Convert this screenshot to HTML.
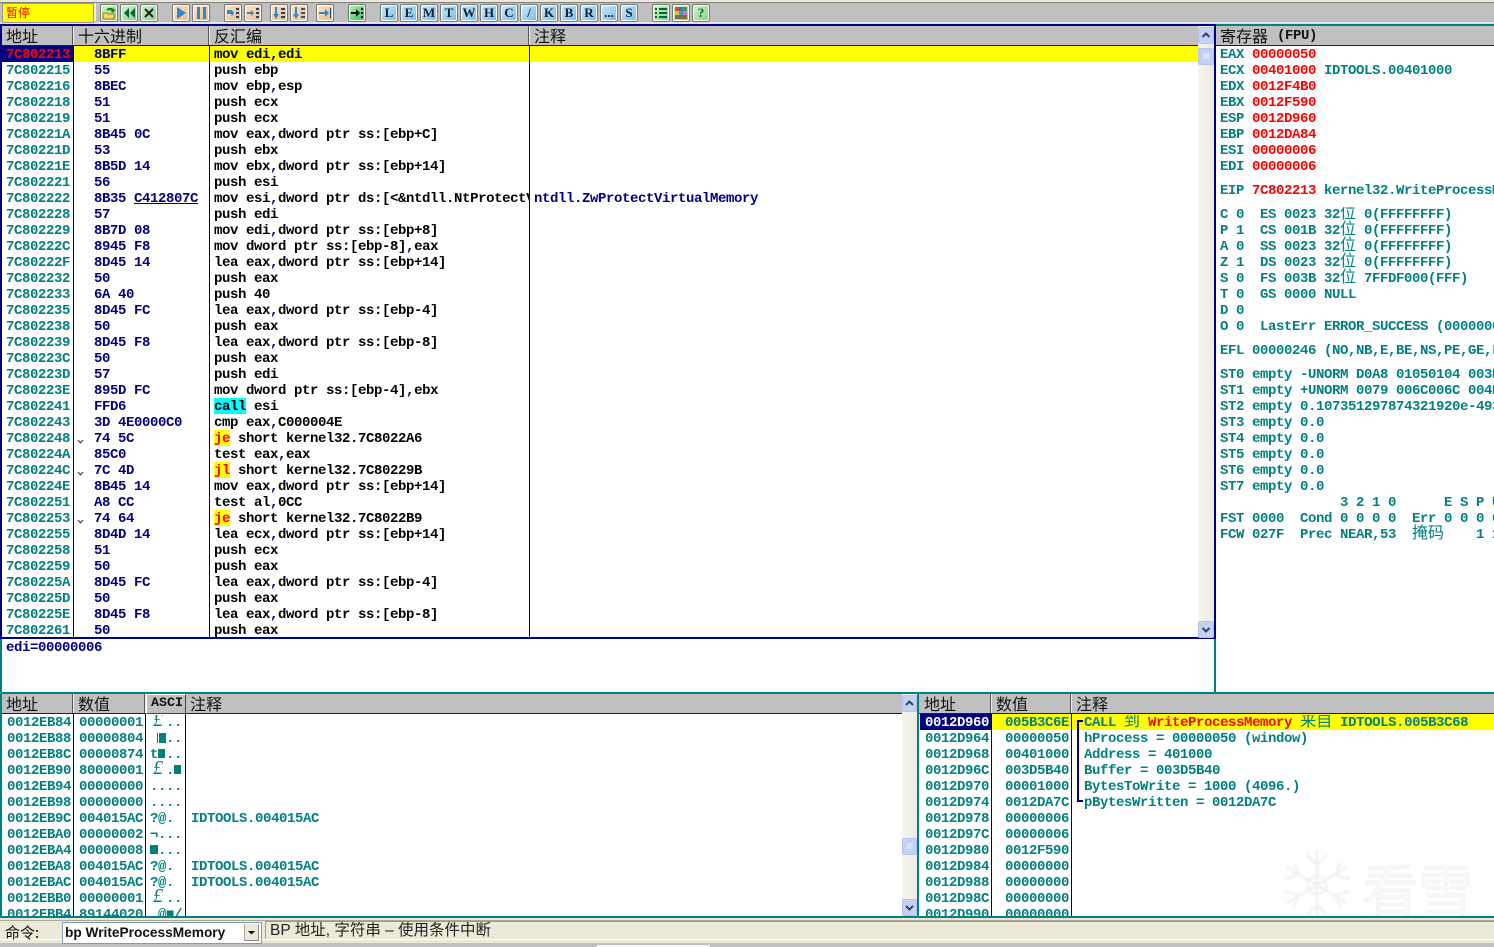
<!DOCTYPE html>
<html><head><meta charset="utf-8"><title>OllyDbg</title>
<style>
html,body{margin:0;padding:0;width:1494px;height:947px;overflow:hidden;background:#fff}
.a{position:absolute}
pre{position:absolute;margin:0;font:bold 14px/16px "Liberation Mono","Noto Sans CJK SC",monospace;letter-spacing:-.4px;overflow:hidden;white-space:pre;transform:translateY(1px)}
.t{color:#008080}.n{color:#000080}.k{color:#000}.r{color:#f00}
i{font-style:normal;color:#000080}
u{text-decoration:underline;text-underline-offset:1px}
.c{font:400 16px/0 "Noto Sans CJK SC",sans-serif;letter-spacing:0;display:inline-block;width:16px;vertical-align:baseline}
.p{font:italic 400 20px/0 "Liberation Serif",serif;letter-spacing:0;display:inline-block;width:16px;text-indent:3px;vertical-align:baseline}
.h{position:absolute;font:400 16px/18px "Noto Sans CJK SC",sans-serif;color:#111;white-space:nowrap;overflow:hidden}
.v{position:absolute;width:1px;background:#000080}
.hd{position:absolute;height:19px;background:#c0c0c0;border-bottom:1px solid #222}
.hv{position:absolute;width:2px;height:19px;background:#555;border-right:1px solid #eee;box-sizing:border-box}
.b{position:absolute;top:4px;width:16px;height:16px;border:1px solid #777;border-radius:2px;box-shadow:inset 0 0 0 1px #fff;text-align:center;font:bold 13px/16px "Liberation Serif",serif;color:#123;overflow:hidden}
.b svg{position:absolute;left:0;top:0}
.g{background:linear-gradient(135deg,#d8f5c8,#7fd088)}
.o{background:linear-gradient(135deg,#fbe6cc,#f0b880)}
.l{background:linear-gradient(135deg,#cfeafa,#78bce8)}
.tr{position:absolute;background:linear-gradient(90deg,#f6f5ef,#ecebe2)}
.sb{position:absolute;width:14px;height:15px;border:1px solid #b4c4ee;border-radius:2px;background:#c3d1f5}
.sb svg{position:absolute;left:0;top:0}
.bk{position:absolute;background:#008080}
</style></head><body>

<!-- toolbar -->
<div class="a" style="left:0;top:0;width:1494px;height:2px;background:#ece9d8"></div>
<div class="a" style="left:0;top:2px;width:1494px;height:1px;background:#808080"></div>
<div class="a" style="left:0;top:3px;width:1494px;height:19px;background:#c0c0c0"></div>
<div class="a" style="left:0;top:22px;width:1494px;height:2px;background:#e4e4e4"></div>
<div class="a" style="left:2px;top:3px;width:90px;height:18px;background:#ff0;border:1px solid #999;color:#f00;font:400 12px/17px 'Noto Sans CJK SC',sans-serif;text-indent:3px">暂停</div>
<div class="a" style="left:94px;top:3px;width:2px;height:18px;background:#eee"></div>

<div class="b g" style="left:100px"><svg width="16" height="16"><path d="M2 8h4l1 1h6v5H2z" fill="#f6d860" stroke="#a08020"/><path d="M6 5a4 3 0 0 1 7 1" fill="none" stroke="#108010" stroke-width="2"/><path d="M11 8l4-3h-5z" fill="#108010"/></svg></div>
<div class="b g" style="left:120px"><svg width="16" height="16"><path d="M8 3v10L3 8zM14 3v10L9 8z" fill="#063"/></svg></div>
<div class="b g" style="left:140px"><svg width="16" height="16"><path d="M4 4l8 8M12 4l-8 8" stroke="#222" stroke-width="2"/></svg></div>
<div class="b o" style="left:172px"><svg width="16" height="16"><path d="M4 2v12l9-6z" fill="#2a8ad0"/></svg></div>
<div class="b o" style="left:192px"><svg width="16" height="16"><path d="M4 2h3v12H4zM10 2h3v12h-3z" fill="#2a8ad0"/></svg></div>
<div class="b o" style="left:224px"><svg width="16" height="16"><path d="M2 5h5l2 3-2 3-1-2H2z" fill="#2a8ad0"/><path d="M11 3h3v2h-3zM11 7h3v2h-3zM11 11h3v2h-3z" fill="#246"/></svg></div>
<div class="b o" style="left:244px"><svg width="16" height="16"><path d="M2 7h4V5l3 3-3 3V9H2z" fill="#2a8ad0"/><path d="M11 3h3v2h-3zM11 7h3v2h-3zM11 11h3v2h-3z" fill="#246"/></svg></div>
<div class="b o" style="left:270px"><svg width="16" height="16"><path d="M4 2h2v7h2l-3 5-3-5h2z" fill="#2a8ad0"/><path d="M10 3h4v2h-4zM10 7h4v2h-4zM10 11h4v2h-4z" fill="#246"/></svg></div>
<div class="b o" style="left:290px"><svg width="16" height="16"><path d="M4 2h2v7h2l-3 5-3-5h2z" fill="#2a8ad0"/><path d="M10 3h4v2h-4zM10 7h4v2h-4zM10 11h4v2h-4z" fill="#357"/></svg></div>
<div class="b o" style="left:316px"><svg width="16" height="16"><path d="M2 7h6V4l4 4-4 4V9H2z" fill="#2a8ad0"/><path d="M13 3h1v10h-1z" fill="#246"/></svg></div>
<div class="b g" style="left:348px;background:linear-gradient(135deg,#b8f0b0,#30c050)"><svg width="16" height="16"><path d="M2 7h5V4l4 4-4 4V9H2z" fill="#111"/><path d="M12 3h2v2h-2zM12 7h2v2h-2zM12 11h2v2h-2z" fill="#111"/></svg></div>

<div class="b l" style="left:380px">L</div><div class="b l" style="left:400px">E</div><div class="b l" style="left:420px">M</div><div class="b l" style="left:440px">T</div><div class="b l" style="left:460px">W</div><div class="b l" style="left:480px">H</div><div class="b l" style="left:500px">C</div><div class="b l" style="left:520px">/</div><div class="b l" style="left:540px">K</div><div class="b l" style="left:560px">B</div><div class="b l" style="left:580px">R</div><div class="b l" style="left:600px">...</div><div class="b l" style="left:620px">S</div>

<div class="b g" style="left:652px"><svg width="16" height="16"><path d="M2 3h2v2H2zM6 3h8v2H6zM2 7h2v2H2zM6 7h8v2H6zM2 11h2v2H2zM6 11h8v2H6z" fill="#063"/></svg></div>
<div class="b g" style="left:672px"><svg width="16" height="16"><path d="M2 2h4v4H2z" fill="#e04040"/><path d="M6 2h4v4H6z" fill="#3070d0"/><path d="M10 2h4v4h-4z" fill="#40a040"/><path d="M2 6h4v4H2z" fill="#e0c040"/><path d="M6 6h4v4H6z" fill="#40a0a0"/><path d="M10 6h4v4h-4z" fill="#d070d0"/><path d="M2 10h12v4H2z" fill="#807040"/></svg></div>
<div class="b g" style="left:692px;color:#063">?</div>

<!-- frame lines -->
<div class="a" style="left:0;top:24px;width:1216px;height:2px;background:#000080"></div>
<div class="a" style="left:1216px;top:24px;width:278px;height:2px;background:#008080"></div>
<div class="a" style="left:0;top:26px;width:2px;height:612px;background:#000080"></div>
<div class="a" style="left:0;top:637px;width:1216px;height:2px;background:#000080"></div>
<div class="a" style="left:0;top:639px;width:2px;height:279px;background:#008080"></div>
<div class="a" style="left:1214px;top:26px;width:2px;height:612px;background:#000080"></div>
<div class="a" style="left:1214px;top:639px;width:2px;height:54px;background:#008080"></div>
<div class="a" style="left:0;top:692px;width:1494px;height:2px;background:#008080"></div>
<div class="a" style="left:917px;top:694px;width:2px;height:224px;background:#008080"></div>

<!-- CPU header -->
<div class="hd" style="left:2px;top:26px;width:1196px"></div>
<div class="hv" style="left:72px;top:26px"></div>
<div class="hv" style="left:208px;top:26px"></div>
<div class="hv" style="left:528px;top:26px"></div>
<div class="h" style="left:6px;top:26px">地址</div>
<div class="h" style="left:78px;top:26px">十六进制</div>
<div class="h" style="left:214px;top:26px">反汇编</div>
<div class="h" style="left:534px;top:26px">注释</div>

<!-- CPU rows -->
<div class="a" style="left:2px;top:46px;width:71px;height:16px;background:#000080"></div>
<div class="a" style="left:74px;top:46px;width:1124px;height:16px;background:#ff0"></div>
<div class="v" style="left:73px;top:46px;height:591px"></div>
<div class="v" style="left:209px;top:46px;height:591px"></div>
<div class="v" style="left:529px;top:46px;height:591px"></div>

<pre class="t" style="left:6px;top:46px;width:67px;height:590px"><span class="r">7C802213</span>
7C802215
7C802216
7C802218
7C802219
7C80221A
7C80221D
7C80221E
7C802221
7C802222
7C802228
7C802229
7C80222C
7C80222F
7C802232
7C802233
7C802235
7C802238
7C802239
7C80223C
7C80223D
7C80223E
7C802241
7C802243
7C802248
7C80224A
7C80224C
7C80224E
7C802251
7C802253
7C802255
7C802258
7C802259
7C80225A
7C80225D
7C80225E
7C802261</pre>

<pre class="n" style="left:94px;top:46px;width:115px;height:590px">8BFF
55
8BEC
51
51
8B45 0C
53
8B5D 14
56
8B35 <u>C412807C</u>
57
8B7D 08
8945 F8
8D45 14
50
6A 40
8D45 FC
50
8D45 F8
50
57
895D FC
FFD6
3D 4E0000C0
74 5C
85C0
7C 4D
8B45 14
A8 CC
74 64
8D4D 14
51
50
8D45 FC
50
8D45 F8
50</pre>

<svg class="a" style="left:74px;top:430px" width="14" height="100"><path d="M4 10l2.500 3 2.500-3M4 42l2.500 3 2.500-3M4 90l2.500 3 2.500-3" fill="none" stroke="#333"/></svg>

<div class="a" style="left:214px;top:398px;width:32px;height:16px;background:#0ff"></div>
<div class="a" style="left:214px;top:430px;width:16px;height:16px;background:#ff0"></div>
<div class="a" style="left:214px;top:462px;width:16px;height:16px;background:#ff0"></div>
<div class="a" style="left:214px;top:510px;width:16px;height:16px;background:#ff0"></div>

<pre class="k" style="left:214px;top:46px;width:315px;height:590px">mov edi,edi
push ebp
mov ebp<i>,</i>esp
push ecx
push ecx
mov eax<i>,</i>dword ptr ss:[ebp+C]
push ebx
mov ebx<i>,</i>dword ptr ss:[ebp+14]
push esi
mov esi<i>,</i>dword ptr ds:[&lt;&amp;ntdll.NtProtectVirtualMemory&gt;]
push edi
mov edi<i>,</i>dword ptr ss:[ebp+8]
mov dword ptr ss:[ebp-8]<i>,</i>eax
lea eax<i>,</i>dword ptr ss:[ebp+14]
push eax
push 40
lea eax<i>,</i>dword ptr ss:[ebp-4]
push eax
lea eax<i>,</i>dword ptr ss:[ebp-8]
push eax
push edi
mov dword ptr ss:[ebp-4]<i>,</i>ebx
call esi
cmp eax<i>,</i>C000004E
<span class="r">je</span> short kernel32.7C8022A6
test eax<i>,</i>eax
<span class="r">jl</span> short kernel32.7C80229B
mov eax<i>,</i>dword ptr ss:[ebp+14]
test al<i>,</i>0CC
<span class="r">je</span> short kernel32.7C8022B9
lea ecx<i>,</i>dword ptr ss:[ebp+14]
push ecx
push eax
lea eax<i>,</i>dword ptr ss:[ebp-4]
push eax
lea eax<i>,</i>dword ptr ss:[ebp-8]
push eax</pre>

<pre class="n" style="left:534px;top:190px;width:300px;height:16px">ntdll.ZwProtectVirtualMemory</pre>

<!-- CPU scrollbar -->
<div class="tr" style="left:1198px;top:26px;width:16px;height:611px"></div>
<div class="sb" style="left:1198px;top:27px"><svg width="14" height="15"><path d="M3.500 9l3.500-3.500L10.500 9" fill="none" stroke="#345" stroke-width="2"/></svg></div>
<div class="sb" style="left:1198px;top:48px"><svg width="14" height="15"><path d="M4 5h6M4 7h6M4 9h6" stroke="#eef" stroke-width="1"/></svg></div>
<div class="sb" style="left:1198px;top:621px"><svg width="14" height="15"><path d="M3.500 6l3.500 3.500L10.500 6" fill="none" stroke="#345" stroke-width="2"/></svg></div>

<!-- info pane -->
<pre class="n" style="left:6px;top:639px;width:400px;height:16px">edi=00000006</pre>

<!-- registers -->
<div class="hd" style="left:1216px;top:26px;width:278px"></div>
<div class="h" style="left:1220px;top:26px">寄存器</div>
<pre class="k" style="left:1277px;top:27px;width:60px;height:16px;color:#111">(FPU)</pre>
<pre class="t" style="left:1220px;top:46px;width:274px;height:128px">EAX <span class="r">00000050</span>
ECX <span class="r">00401000</span> IDTOOLS.00401000
EDX <span class="r">0012F4B0</span>
EBX <span class="r">0012F590</span>
ESP <span class="r">0012D960</span>
EBP <span class="r">0012DA84</span>
ESI <span class="r">00000006</span>
EDI <span class="r">00000006</span></pre>
<pre class="t" style="left:1220px;top:182px;width:274px;height:16px">EIP <span class="r">7C802213</span> kernel32.WriteProcessMemory</pre>
<pre class="t" style="left:1220px;top:206px;width:274px;height:128px">C 0  ES 0023 32<span class="c">位</span> 0(FFFFFFFF)
P 1  CS 001B 32<span class="c">位</span> 0(FFFFFFFF)
A 0  SS 0023 32<span class="c">位</span> 0(FFFFFFFF)
Z 1  DS 0023 32<span class="c">位</span> 0(FFFFFFFF)
S 0  FS 003B 32<span class="c">位</span> 7FFDF000(FFF)
T 0  GS 0000 NULL
D 0
O 0  LastErr ERROR_SUCCESS (00000000)</pre>
<pre class="t" style="left:1220px;top:342px;width:274px;height:16px">EFL 00000246 (NO,NB,E,BE,NS,PE,GE,LE)</pre>
<pre class="t" style="left:1220px;top:366px;width:274px;height:176px">ST0 empty -UNORM D0A8 01050104 003E0000
ST1 empty +UNORM 0079 006C006C 004E0044
ST2 empty 0.107351297874321920e-4933
ST3 empty 0.0
ST4 empty 0.0
ST5 empty 0.0
ST6 empty 0.0
ST7 empty 0.0
               3 2 1 0      E S P U O Z D I
FST 0000  Cond 0 0 0 0  Err 0 0 0 0 0 0 0 0
FCW 027F  Prec NEAR,53  <span class="c">掩</span><span class="c">码</span>    1 1 1 1 1 1</pre>

<!-- dump header -->
<div class="hd" style="left:2px;top:694px;width:900px"></div>
<div class="hv" style="left:72px;top:694px"></div>
<div class="hv" style="left:144px;top:694px"></div>
<div class="a" style="left:146px;top:694px;width:38px;height:18px;background:#c0c0c0;border:1px solid;border-color:#fff #444 #444 #fff;font:bold 13.333px/18px 'Liberation Mono',monospace;color:#111;text-indent:4px;overflow:hidden">ASCI</div>
<div class="h" style="left:6px;top:694px">地址</div>
<div class="h" style="left:78px;top:694px">数值</div>
<div class="h" style="left:190px;top:694px">注释</div>

<div class="v" style="left:73px;top:714px;height:202px"></div>
<div class="v" style="left:145px;top:714px;height:202px"></div>
<div class="v" style="left:185px;top:714px;height:202px"></div>

<pre class="t" style="left:7px;top:714px;width:66px;height:201px">0012EB84
0012EB88
0012EB8C
0012EB90
0012EB94
0012EB98
0012EB9C
0012EBA0
0012EBA4
0012EBA8
0012EBAC
0012EBB0
0012EBB4</pre>
<pre class="t" style="left:79px;top:714px;width:66px;height:201px">00000001
00000804
00000874
80000001
00000000
00000000
004015AC
00000002
00000008
004015AC
004015AC
00000001
89144020</pre>
<pre class="t" style="left:150px;top:714px;width:35px;height:201px"><span class="p">£</span>..
  ..
t ..
<span class="p">£</span>.
....
....
?@.
¬...
 ...
?@.
?@.
<span class="p">£</span>..
 @■/</pre>
<div class="bk" style="left:159px;top:733px;width:7px;height:10px"></div>
<div class="bk" style="left:157px;top:733px;width:1px;height:10px"></div>
<div class="bk" style="left:158px;top:749px;width:7px;height:9px"></div>
<div class="bk" style="left:174px;top:765px;width:7px;height:9px"></div>
<div class="bk" style="left:150px;top:845px;width:8px;height:9px"></div>
<pre class="t" style="left:191px;top:810px;width:300px;height:80px">IDTOOLS.004015AC
 
 
IDTOOLS.004015AC
IDTOOLS.004015AC</pre>

<!-- dump scrollbar -->
<div class="tr" style="left:902px;top:694px;width:15px;height:222px"></div>
<div class="sb" style="left:902px;top:695px;width:13px"><svg width="13" height="15"><path d="M3 9l3.500-3.500L10 9" fill="none" stroke="#345" stroke-width="2"/></svg></div>
<div class="sb" style="left:902px;top:838px;width:13px"><svg width="13" height="15"><path d="M3.500 5h6M3.500 7h6M3.500 9h6" stroke="#eef" stroke-width="1"/></svg></div>
<div class="sb" style="left:902px;top:899px;width:13px"><svg width="13" height="15"><path d="M3 6l3.500 3.500L10 6" fill="none" stroke="#345" stroke-width="2"/></svg></div>

<!-- watermark -->
<svg class="a" style="left:1280px;top:845px;filter:blur(.6px)" width="200" height="85">
<g fill="none" stroke="#f3f3f3" stroke-width="3">
<path d="M37 5v70M7 22l60 36M67 22L7 58"/>
<path d="M27 10l10 10 10-10M27 70l10-10 10 10M4 34l14-4-4-12M70 34l-14-4 4-12M4 46l14 4-4 12M70 46l-14 4 4 12"/>
<path d="M37 30l9 5v10l-9 5-9-5V35z"/>
</g>
<text x="82" y="66" font-family="Noto Sans CJK SC,sans-serif" font-size="56" font-weight="300" fill="#fff" stroke="#f2f2f2" stroke-width="1.500">看雪</text>
</svg>

<!-- stack header -->
<div class="hd" style="left:919px;top:694px;width:575px"></div>
<div class="hv" style="left:990px;top:694px"></div>
<div class="hv" style="left:1070px;top:694px"></div>
<div class="h" style="left:924px;top:694px">地址</div>
<div class="h" style="left:996px;top:694px">数值</div>
<div class="h" style="left:1076px;top:694px">注释</div>

<div class="a" style="left:920px;top:714px;width:71px;height:16px;background:#000080"></div>
<div class="a" style="left:992px;top:714px;width:502px;height:16px;background:#ff0"></div>
<div class="v" style="left:991px;top:714px;height:202px"></div>
<div class="v" style="left:1071px;top:714px;height:202px"></div>

<pre class="t" style="left:925px;top:714px;width:66px;height:201px"><span style="color:#fff">0012D960</span>
0012D964
0012D968
0012D96C
0012D970
0012D974
0012D978
0012D97C
0012D980
0012D984
0012D988
0012D98C
0012D990</pre>
<pre class="t" style="left:1005px;top:714px;width:66px;height:201px">005B3C6E
00000050
00401000
003D5B40
00001000
0012DA7C
00000006
00000006
0012F590
00000000
00000000
00000000
00000000</pre>
<svg class="a" style="left:1074px;top:714px" width="10" height="96"><path d="M9 7H4V87H9" fill="none" stroke="#000080" stroke-width="2"/></svg>
<pre class="t" style="left:1084px;top:714px;width:410px;height:100px">CALL <span class="c">到</span> <span class="r">WriteProcessMemory</span> <span class="c">来</span><span class="c">自</span> IDTOOLS.005B3C68
hProcess = 00000050 (window)
Address = 401000
Buffer = 003D5B40
BytesToWrite = 1000 (4096.)
pBytesWritten = 0012DA7C</pre>

<!-- command bar -->
<div class="a" style="left:0;top:916px;width:1494px;height:2px;background:#008080"></div>
<div class="a" style="left:0;top:918px;width:1494px;height:25px;background:#ece9d8"></div>
<div class="a" style="left:0;top:920px;width:1494px;height:1px;background:#aca899"></div>
<div class="a" style="left:0;top:939px;width:1494px;height:1px;background:#fff"></div>
<div class="a" style="left:0;top:943px;width:1494px;height:4px;background:#c0c0c0"></div>
<div class="a" style="left:597px;top:945px;width:113px;height:2px;background:#f4f4f4"></div>
<div class="a" style="left:5px;top:923px;font:400 15px/20px 'Noto Sans CJK SC',sans-serif;color:#111">命令:</div>
<div class="a" style="left:62px;top:922px;width:198px;height:20px;background:#fff;border:1px solid #7f9db9;box-sizing:content-box;font:bold 13.700px/20px 'Liberation Sans',sans-serif;color:#111;text-indent:2px">bp WriteProcessMemory</div>
<div class="a" style="left:244px;top:924px;width:15px;height:17px;background:#ece9d8;border-left:1px solid #aaa;border-right:1px solid #888;border-bottom:1px solid #888;box-sizing:border-box"><svg width="14" height="16"><path d="M3 7h7l-3.500 3.500z" fill="#000"/></svg></div>
<div class="a" style="left:265px;top:921px;width:1229px;height:18px;border-left:1px solid #999;border-top:1px solid #999;box-sizing:border-box;font:400 15.500px/18px 'Liberation Sans','Noto Sans CJK SC',sans-serif;color:#222;text-indent:4px">BP 地址, 字符串 – 使用条件中断</div>

</body></html>
